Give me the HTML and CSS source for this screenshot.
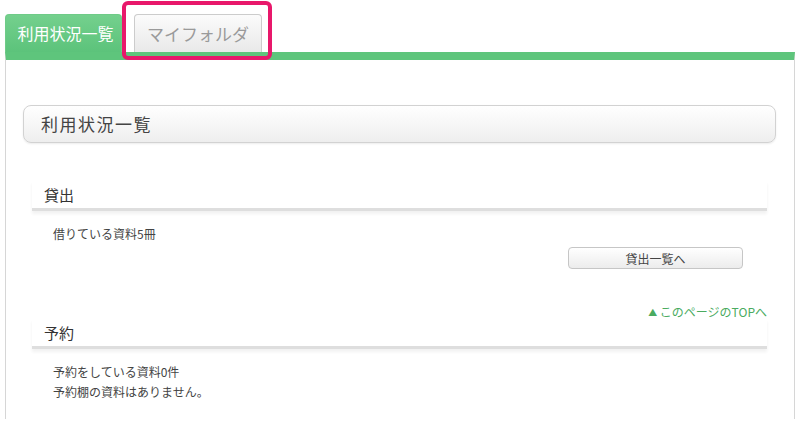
FILE: index.html
```html
<!DOCTYPE html>
<html lang="ja">
<head>
  <meta charset="UTF-8">
  <title>利用状況一覧</title>
  <link rel="stylesheet" href="styles.css">
</head>
<body>
  <div class="page">
    <div class="tabs">
      <a class="tab tab-active" href="#">利用状況一覧</a>
      <a class="tab" href="#">マイフォルダ</a>
    </div>

    <!-- annotation frame around the second tab -->
    <div class="mark"></div>

    <div class="panel">
      <div class="title-box">利用状況一覧</div>

      <div class="section">
        <h2>貸出</h2>
        <p class="line first">借りている資料5冊</p>
        <div class="btn-row">
          <button class="btn">貸出一覧へ</button>
        </div>
        <div class="to-top"><a href="#"><span class="arrow">▲</span> このページのTOPへ</a></div>
      </div>

      <div class="section">
        <h2>予約</h2>
        <p class="line first">予約をしている資料0件</p>
        <p class="line">予約棚の資料はありません。</p>
      </div>
    </div>
  </div>
</body>
</html>
```

FILE: styles.css
```css
body {
  margin: 0;
  background: #fff;
  color: #444;
  font-family: "Noto Sans CJK JP", "Noto Sans", sans-serif;
  overflow: hidden;
}

.page {
  position: relative;
  padding: 0 5px;
}

.tabs {
  display: flex;
  align-items: flex-end;
  gap: 12px;
  padding-top: 14px;
  height: 38px;
}

.tab {
  display: block;
  height: 38px;
  line-height: 37px;
  box-sizing: border-box;
  padding: 0;
  white-space: nowrap;
  font-size: 17px;
  color: #9a9a9a;
  text-decoration: none;
  border: 1px solid #ccc;
  border-bottom: none;
  border-radius: 4px 4px 0 0;
  background: linear-gradient(#fbfbfb, #e9e9e9);
  width: 128px;
  text-align: center;
}

.tab-active {
  width: 117px;
  padding-left: 4px;
  font-size: 16px;
  color: #fff;
  border-color: #6fcb88;
  background: linear-gradient(#74d08d, #5cc37b);
}

.mark {
  position: absolute;
  left: 122px;
  top: 1px;
  width: 150px;
  height: 59px;
  box-sizing: border-box;
  border: 4px solid #e8186b;
  border-radius: 6px;
}

.panel {
  border-top: 8px solid #5ec57c;
  border-left: 1px solid #d6d6d6;
  border-right: 1px solid #d6d6d6;
  padding: 45px 18px 20px 17px;
  height: 294px;
}

.title-box {
  height: 38px;
  box-sizing: border-box;
  line-height: 36px;
  padding-left: 17px;
  font-size: 17px;
  letter-spacing: 1.5px;
  color: #444;
  border: 1px solid #d2d2d2;
  border-radius: 8px;
  background: linear-gradient(#fff, #eee);
  box-shadow: 0 1px 2px rgba(0,0,0,0.08);
}

.section {
  margin: 38px 9px 0 9px;
}

.section + .section {
  margin-top: 0;
}

h2 {
  margin: 0;
  height: 27px;
  line-height: 27px;
  padding-left: 12px;
  font-size: 15px;
  font-weight: normal;
  color: #333;
  border-bottom: 3px solid #dedede;
  box-shadow: 0 3px 3px #f2f2f2;
}

.line {
  margin: 0;
  padding-left: 21px;
  font-size: 12px;
  line-height: 20px;
}

.line.first {
  margin-top: 13px;
}

.btn-row {
  display: flex;
  justify-content: flex-end;
  margin: 3px 24px 0 0;
}

.btn {
  width: 175px;
  height: 22px;
  padding: 0;
  font-family: inherit;
  font-size: 12px;
  color: #444;
  border: 1px solid #c6c6c6;
  border-radius: 4px;
  background: linear-gradient(#fff, #ececec);
  cursor: pointer;
}

.to-top {
  margin-top: 37px;
  text-align: right;
  font-size: 12px;
  line-height: 12px;
}

.to-top a {
  color: #4aab60;
  text-decoration: none;
}

.arrow {
  font-size: 9px;
  vertical-align: 1px;
}
```
